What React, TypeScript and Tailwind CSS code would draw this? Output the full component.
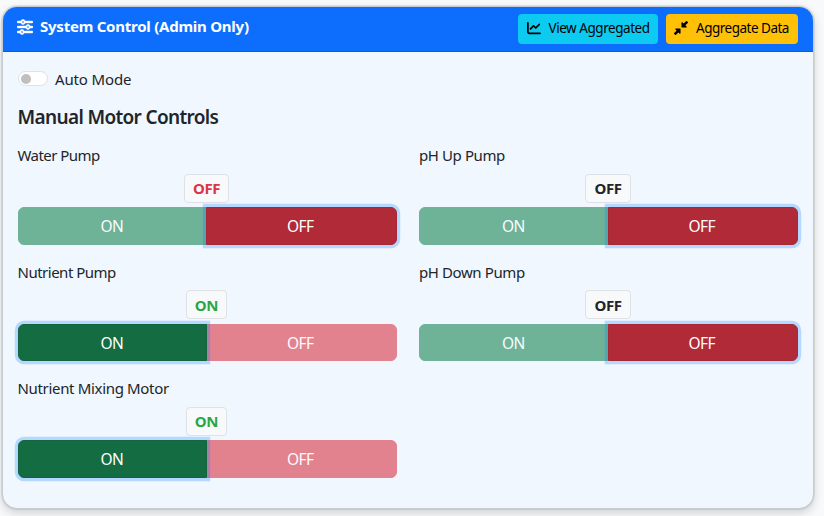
import { FaSliders, FaChartLine, FaDownLeftAndUpRightToCenter } from 'react-icons/fa6';

type Motor = { name: string; spacing: string; on: boolean; tone: string };

const left: Motor[] = [
  { name: 'Water Pump', spacing: 'tracking-[-0.55px]', on: false, tone: 'text-[#dc3545]' },
  { name: 'Nutrient Pump', spacing: 'tracking-[-0.5px]', on: true, tone: 'text-[#28a745]' },
  { name: 'Nutrient Mixing Motor', spacing: 'tracking-[-0.33px]', on: true, tone: 'text-[#28a745]' },
];

const right: Motor[] = [
  { name: 'pH Up Pump', spacing: 'tracking-[-0.4px]', on: false, tone: 'text-[#212529]' },
  { name: 'pH Down Pump', spacing: 'tracking-[-0.4px]', on: false, tone: 'text-[#212529]' },
];

const glow = 'relative z-10 shadow-[0_0_0_3.2px_rgba(0,123,255,0.25)]';

function MotorControl({ name, spacing, on, tone }: Motor) {
  return (
    <div className="h-[116.5px]">
      <div className={`h-[30.6px] text-[15px] leading-6 ${spacing}`}>{name}</div>
      <div className="flex h-[33.6px] justify-center pr-px">
        <span
          className={`flex h-[29px] items-center justify-center rounded-[4px] border border-[#dee2e6] bg-[#f8f9fa] pt-px text-[15px] font-bold tracking-[-0.4px] ${tone} ${on ? 'w-[40.5px]' : 'w-[45.5px]'}`}
        >
          {on ? 'ON' : 'OFF'}
        </span>
      </div>
      <div className="flex h-[37.3px] text-[15.5px] tracking-[-0.6px] text-white">
        <button
          className={`flex-1 rounded-l-[6px] border pt-[2px] pr-px ${on ? `border-[#13653f] bg-[#146c43] ${glow}` : 'border-[#198754] bg-[#198754] opacity-60'}`}
        >
          ON
        </button>
        <button
          className={`-ml-px flex-1 rounded-r-[6px] border pt-[2px] pr-[2px] ${on ? 'border-[#dc3545] bg-[#dc3545] opacity-60' : `border-[#a52834] bg-[#b02a37] ${glow}`}`}
        >
          OFF
        </button>
      </div>
    </div>
  );
}

export default function App() {
  return (
    <div className="h-[516px] overflow-hidden bg-[#f8f9fa] pt-[6px] pl-[2px] font-['Noto_Sans',sans-serif] text-[#212529]">
      <section className="h-[503px] w-[811.5px] overflow-hidden rounded-[15px] border border-[#c5ccd4] bg-[#f0f7ff] shadow-[0_4px_10px_rgba(0,0,0,0.16),0_0_0_1px_rgba(0,0,0,0.08)]">
        <header className="flex h-[45px] items-start justify-between border-b border-[#0b5ed7] bg-[#0d6efd] pt-[7px] pr-[15px] pl-[14px]">
          <h1 className="flex items-center text-[15px] leading-[25px] font-bold tracking-[-0.24px] text-white">
            <FaSliders className="mr-[7px] size-4" stroke="currentColor" strokeWidth="14" />
            System Control (Admin Only)
          </h1>
          <div className="flex gap-[7.5px] text-[13.5px] text-black">
            <button className="flex h-[29.5px] w-[140.5px] items-center rounded-[4px] bg-[#0dcaf0] pb-px pl-[9px] tracking-[-0.45px]">
              <FaChartLine className="mr-[8px] size-[14px]" />
              View Aggregated
            </button>
            <button className="flex h-[29.5px] w-[132px] items-center rounded-[4px] bg-[#ffc107] pb-px pl-[8.5px] tracking-[-0.5px]">
              <FaDownLeftAndUpRightToCenter className="mr-[8px] size-[14px]" />
              Aggregate Data
            </button>
          </div>
        </header>
        <main className="px-[14.5px] pt-[15.5px]">
          <label className="flex h-6 items-center text-[15px] tracking-[-0.15px]">
            <span className="mr-[7.5px] mb-[2px] flex h-[15px] w-[30px] items-center rounded-full border border-[#dee2e6] bg-white pl-[2px]">
              <span className="size-[10px] rounded-full bg-[#bfbfbf]" />
            </span>
            Auto Mode
          </label>
          <h2 className="mt-[13.4px] mb-[14.2px] text-[19px] leading-6 font-semibold tracking-[-0.65px]">
            Manual Motor Controls
          </h2>
          <div className="grid grid-cols-2 gap-x-[22.5px]">
            <div>{left.map((m) => <MotorControl key={m.name} {...m} />)}</div>
            <div>{right.map((m) => <MotorControl key={m.name} {...m} />)}</div>
          </div>
        </main>
      </section>
    </div>
  );
}
